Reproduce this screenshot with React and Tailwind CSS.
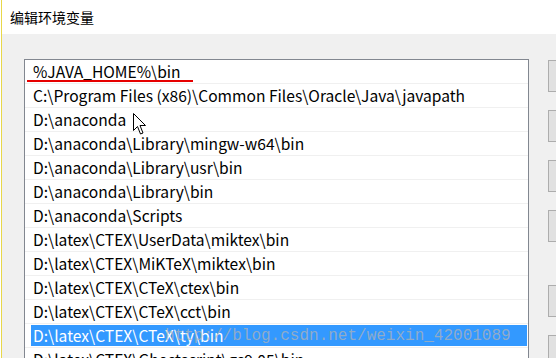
const rows = [
  "%JAVA_HOME%\\bin",
  "C:\\Program Files (x86)\\Common Files\\Oracle\\Java\\javapath",
  "D:\\anaconda",
  "D:\\anaconda\\Library\\mingw-w64\\bin",
  "D:\\anaconda\\Library\\usr\\bin",
  "D:\\anaconda\\Library\\bin",
  "D:\\anaconda\\Scripts",
  "D:\\latex\\CTEX\\UserData\\miktex\\bin",
  "D:\\latex\\CTEX\\MiKTeX\\miktex\\bin",
  "D:\\latex\\CTEX\\CTeX\\ctex\\bin",
  "D:\\latex\\CTEX\\CTeX\\cct\\bin",
  "D:\\latex\\CTEX\\CTeX\\ty\\bin",
  "D:\\latex\\CTEX\\Ghostscript\\gs9.05\\bin",
];

const SELECTED = 11;

function PathRow({ text, selected }) {
  return (
    <div className="h-[24px] border-b border-[#f0f0f0] pl-[6px] pr-[1px] py-[1px]">
      <div
        className={
          "h-full pl-[2px] flex items-center whitespace-nowrap " +
          (selected ? "bg-[#3399ff] text-white" : "text-black")
        }
      >
        {text}
      </div>
    </div>
  );
}

function Cursor() {
  return (
    <svg className="absolute left-[133px] top-[113px]" width="14" height="23" viewBox="0 0 14 23">
      <path
        d="M0.5 0.5 L0.5 17.5 L4.5 13.5 L7.5 21 L10 20 L7 12.5 L12.5 12.5 Z"
        fill="white"
        stroke="black"
        strokeWidth="1"
        strokeLinejoin="miter"
      />
    </svg>
  );
}

export default function App() {
  const buttons = [
    "h-[32px] mt-[26px]",
    "h-[32px] mt-[18px]",
    "h-[32px] mt-[18px]",
    "h-[32px] mt-[18px]",
    "h-[32px] mt-[43px]",
    "h-[32px] mt-[18px]",
  ];
  return (
    <div
      className="relative w-[556px] h-[358px] overflow-hidden flex bg-[#f0f0f0]"
      style={{ fontFamily: '"Noto Sans CJK SC", "Noto Sans", sans-serif' }}
    >
      <div className="w-[2px] shrink-0 bg-white border-r border-[#e8d84a]"></div>
      <div className="flex-1 flex flex-col">
        <div className="h-[34px] bg-white shrink-0 pl-[8px] flex items-center text-[14px] text-black">
          编辑环境变量
        </div>
        <div className="flex flex-1">
          <div className="ml-[22px] mt-[25px] w-[505px] h-[320px] shrink-0 bg-white border border-[#828790] text-[15.6px] relative">
            {rows.map((r, i) => (
              <PathRow key={i} text={r} selected={i === SELECTED} />
            ))}
            <div className="absolute left-[2px] top-[20px] w-[166px] h-[1.5px] bg-[#e60000]"></div>
          </div>
          <div className="ml-[19px] flex flex-col shrink-0">
            {buttons.map((c, i) => (
              <div key={i} className={c + " w-[75px] bg-[#e1e1e1] border border-[#adadad]"}></div>
            ))}
          </div>
        </div>
      </div>
      <Cursor />
      <div
        className="absolute left-[165px] top-[325px] text-[16px] leading-[22px] text-[rgba(179,179,179,0.72)] whitespace-nowrap"
        style={{ fontFamily: '"Liberation Mono", monospace' }}
      >
        http://blog.csdn.net/weixin_42001089
      </div>
    </div>
  );
}
